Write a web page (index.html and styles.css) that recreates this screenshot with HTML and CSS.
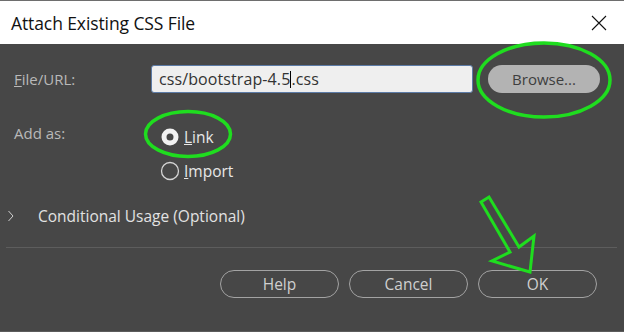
FILE: index.html
```html
<!DOCTYPE html>
<html>
<head>
	<meta charset="utf-8">
	<title>Attach Existing CSS File</title>
	<link rel="stylesheet" href="styles.css">
</head>
<body>
  <div class="dialog">
    <div class="titlebar">
      <span class="title">Attach Existing CSS File</span>
      <svg class="close" width="16" height="16" viewBox="0 0 16 16">
        <path d="M1 1 L15 15 M15 1 L1 15" stroke="#111" stroke-width="1.1" fill="none"/>
      </svg>
    </div>

    <div class="content">
      <div class="file_row">
        <label class="field_label"><u>F</u>ile/URL:</label>
        <div class="text_input">css/bootstrap-4.5<span class="caret"></span>.css</div>
        <button class="browse">Browse...</button>
      </div>

      <div class="add_row">
        <span class="field_label add_label">Add as:</span>
        <div class="radios">
          <div class="radio">
            <svg width="20" height="20" viewBox="0 0 20 20"><circle cx="10" cy="10" r="6" stroke="#f2f2f2" stroke-width="5" fill="none"/></svg>
            <span><u>L</u>ink</span>
          </div>
          <div class="radio">
            <svg width="20" height="20" viewBox="0 0 20 20"><circle cx="10" cy="10" r="8.5" stroke="#d4d4d4" stroke-width="1.3" fill="none"/></svg>
            <span><u>I</u>mport</span>
          </div>
        </div>
      </div>

      <div class="conditional">
        <svg class="chevron" width="8" height="12" viewBox="0 0 8 12"><path d="M1.5 1 L6 6 L1.5 11" stroke="#cfcfcf" stroke-width="1" fill="none"/></svg>
        <span>Conditional Usage (Optional)</span>
      </div>

      <div class="separator"></div>

      <div class="buttons">
        <button class="btn">Help</button>
        <button class="btn">Cancel</button>
        <button class="btn">OK</button>
      </div>
    </div>

    <!-- green marks drawn over the dialog -->
    <svg class="marks" width="624" height="332" viewBox="0 0 624 332">
      <ellipse cx="544" cy="80" rx="66" ry="37" stroke="#1fdd1f" stroke-width="3.5" fill="none"/>
      <ellipse cx="188" cy="134" rx="42.5" ry="22.5" stroke="#1fdd1f" stroke-width="3.5" fill="none"/>
      <polygon points="481,202 489,197 519,247 534,236 530,272 492,261 510,252" stroke="#1fdd1f" stroke-width="3" fill="none"/>
    </svg>
  </div>
</body>
</html>
```

FILE: styles.css
```css
body {
	margin: 0;
	background-color: #474747;
	font-family: 'Open Sans', sans-serif;
}

.dialog {
	position: relative;
	width: 624px;
	height: 332px;
	background-color: #474747;
	box-sizing: border-box;
	border-top: 1px solid #6e6e6e;
	border-bottom: 1px solid #5c5c5c;
	overflow: hidden;
}

.titlebar {
	height: 43px;
	background-color: #fff;
	display: flex;
	align-items: center;
	justify-content: space-between;
	padding: 0 17px 0 11px;
}

.title {
	font-size: 17.5px;
	color: #111;
	letter-spacing: -0.1px;
}

.close {
	margin-top: 1px;
}

.content {
	display: flex;
	flex-direction: column;
}

.field_label {
	color: #b9b9b9;
	font-size: 15px;
}

.file_row {
	display: flex;
	align-items: center;
	margin-top: 21px;
	height: 28px;
	padding-left: 14px;
}

.file_row .field_label {
	width: 137px;
}

.text_input {
	width: 322px;
	height: 28px;
	box-sizing: border-box;
	background-color: #efefef;
	border: 1px solid #5c7ba6;
	border-radius: 3px;
	padding-left: 7px;
	font-size: 16px;
	line-height: 26px;
	color: #333;
	letter-spacing: 0.1px;
}

.caret {
	display: inline-block;
	width: 1px;
	height: 17px;
	background-color: #000;
	vertical-align: -3px;
}

.browse {
	margin-left: 15px;
	width: 112px;
	height: 28px;
	border: none;
	border-radius: 14px;
	background-color: #b3b3b3;
	color: #3e3e3e;
	font-family: 'Open Sans', sans-serif;
	font-size: 15px;
	padding: 0;
}

.add_row {
	display: flex;
	margin-top: 27px;
	padding-left: 14px;
}

.add_label {
	width: 146px;
	line-height: 22px;
	margin-top: 2px;
}

.radios {
	display: flex;
	flex-direction: column;
}

.radio {
	display: flex;
	align-items: center;
	height: 34px;
	gap: 4px;
	color: #e8e8e8;
	font-size: 15.5px;
}

.conditional {
	display: flex;
	align-items: center;
	height: 28px;
	margin-top: 14px;
	padding-left: 7px;
	color: #e2e2e2;
	font-size: 15.5px;
}

.chevron {
	margin-right: 23px;
}

.separator {
	height: 1px;
	background-color: #5d5d5d;
	margin: 17px 7px 0 6px;
}

.buttons {
	display: flex;
	justify-content: flex-end;
	gap: 10px;
	margin-top: 22px;
	padding-right: 27px;
}

.btn {
	width: 119px;
	height: 28px;
	box-sizing: border-box;
	border: 1px solid #a3a3a3;
	border-radius: 14px;
	background: transparent;
	color: #cfcfcf;
	font-family: 'Open Sans', sans-serif;
	font-size: 15.5px;
	padding: 0;
}

.marks {
	position: absolute;
	top: -1px;
	left: 0;
	pointer-events: none;
}
```
